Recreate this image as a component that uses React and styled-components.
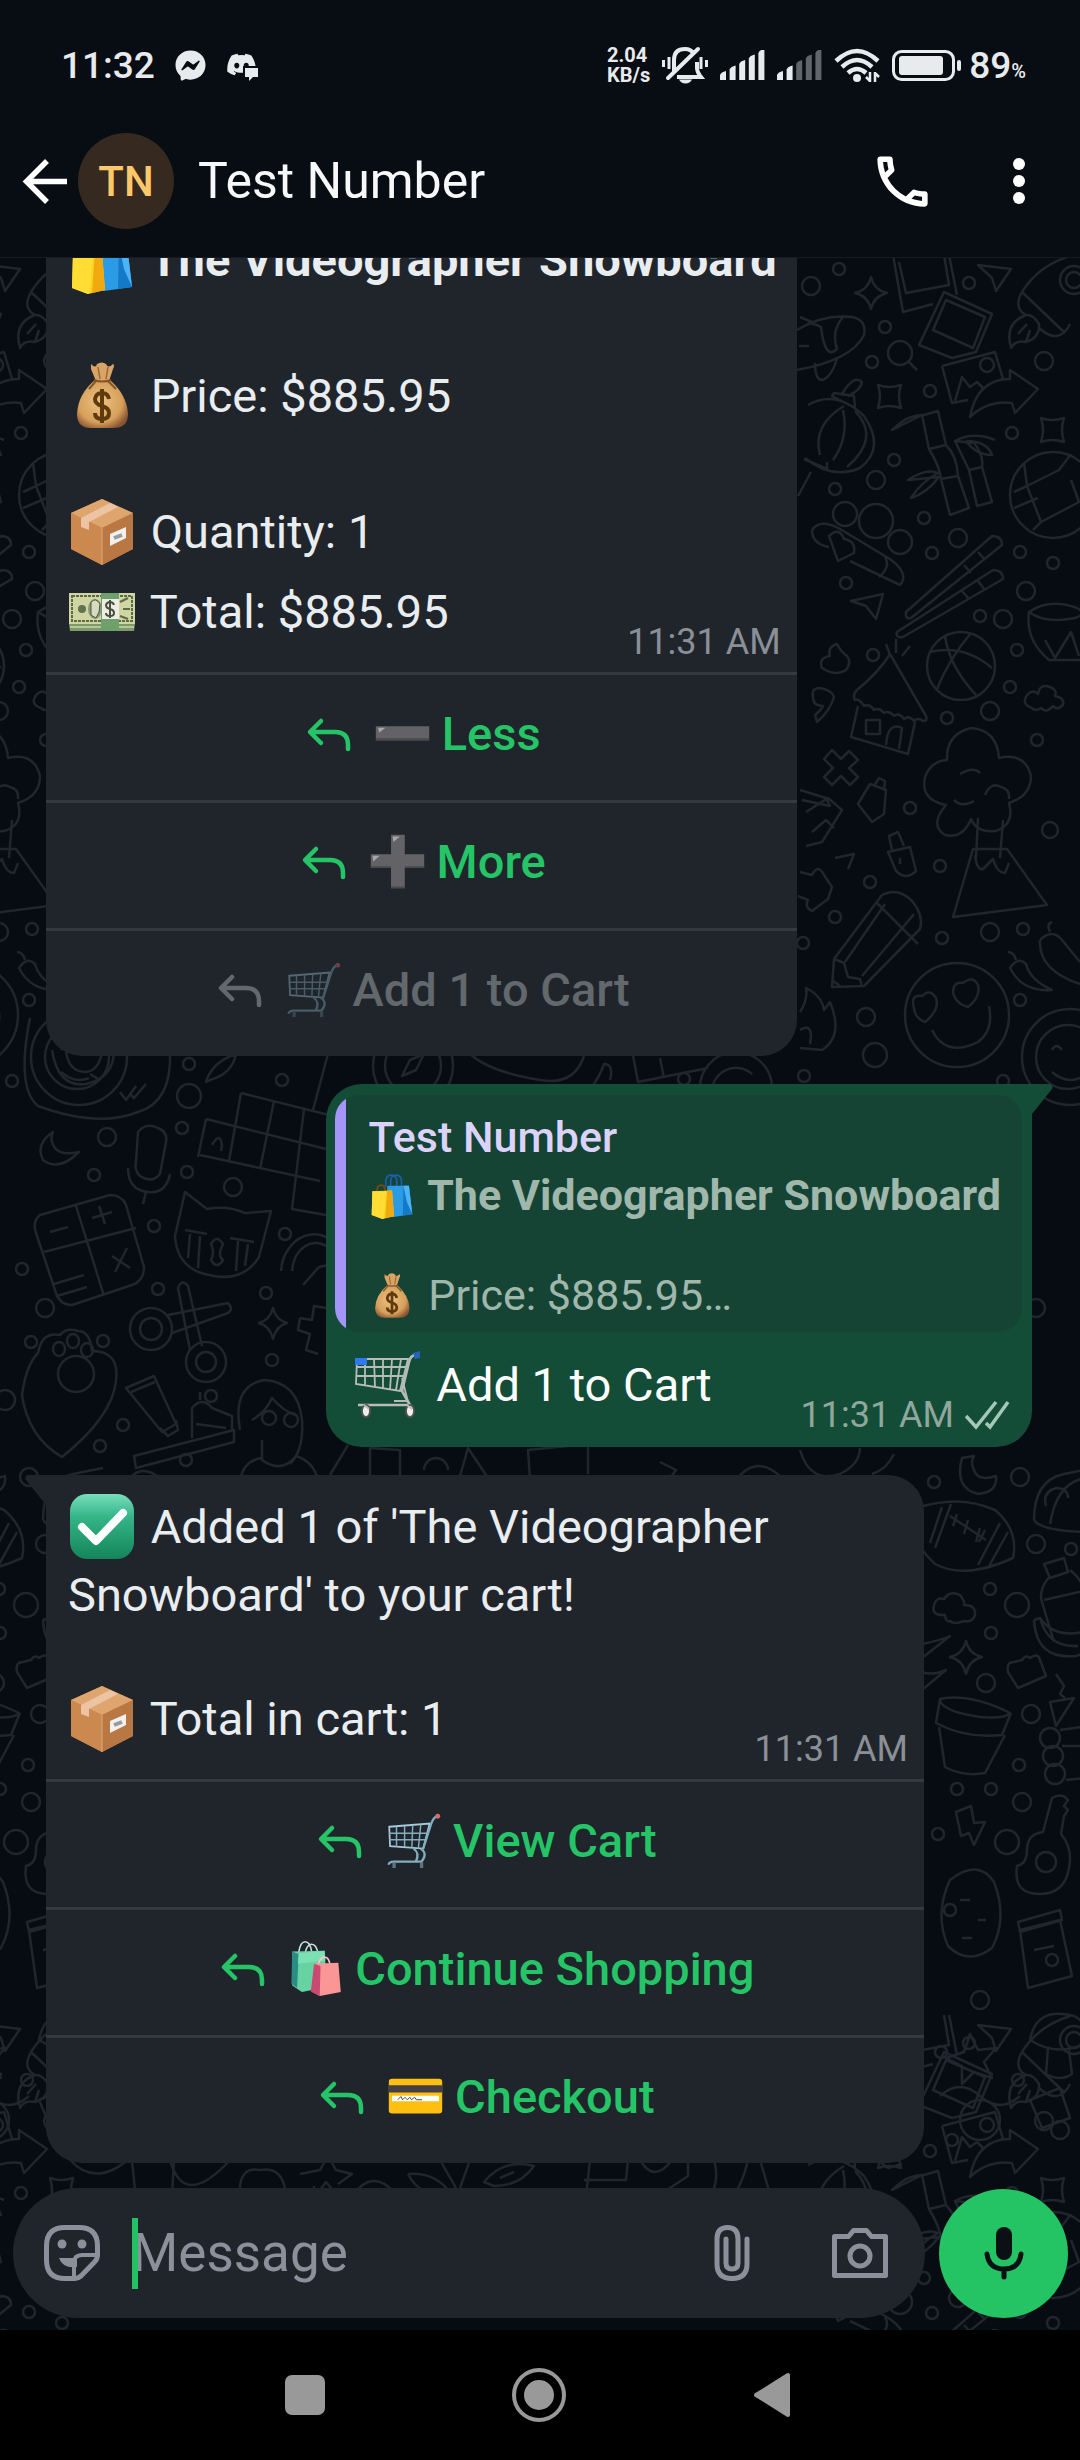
import React from 'react'
import styled, { createGlobalStyle } from 'styled-components';
import { FaFacebookMessenger, FaDiscord } from 'react-icons/fa';
import { MdOutlineCall } from 'react-icons/md';

const GlobalStyle = createGlobalStyle`
  * {
    box-sizing: border-box;
  }
  body {
    margin: 0;
    background: #000;
    font-family: Roboto, "Liberation Sans", sans-serif;
  }
  button, input {
    font-family: inherit;
    border: 0;
    padding: 0;
    background: none;
  }
  p {
    margin: 0;
  }
  svg {
    display: block;
    flex: none;
  }
`

/* ---------- layout ---------- */

const Screen = styled.div`
  display: flex;
  flex-direction: column;
  height: 100vh;
  background: #080c13;
  color: #e9edf0;
`
const StatusBar = styled.div`
  display: flex;
  align-items: center;
  height: 105px;
  padding: 25px 54px 0 61px;
  color: #e8ebed;
`
const StatusGroup = styled.div`
  display: flex;
  align-items: center;
  gap: ${props => props.$gap}px;
  margin-left: ${props => props.$end ? 'auto' : '0'};
`
const Clock = styled.time`
  font-size: 37px;
  font-weight: 500;
`
const Speed = styled.div`
  font-size: 20px;
  font-weight: 700;
  line-height: 20px;
`
const Percent = styled.div`
  display: flex;
  align-items: baseline;
  font-size: 37px;
  font-weight: 500;
`
const PercentSign = styled.span`
  font-size: 20px;
`
const Header = styled.header`
  display: flex;
  align-items: center;
  height: 153px;
  padding: 0 46px 0 19px;
  border-bottom: 1px solid #161b22;
`
const IconButton = styled.button`
  display: flex;
  align-items: center;
  justify-content: center;
  color: ${props => props.$color || '#fff'};
`
const Avatar = styled.div`
  display: flex;
  align-items: center;
  justify-content: center;
  width: 96px;
  height: 96px;
  margin: 0 24px 0 6px;
  border-radius: 50%;
  background: #362a20;
  color: #fdc76b;
  font-size: 42px;
  font-weight: 500;
`
const ContactName = styled.h1`
  flex: 1;
  margin: 0;
  font-size: 50px;
  font-weight: 400;
  color: #f7f8fa;
`
const HeaderActions = styled.div`
  display: flex;
  align-items: center;
  gap: 68px;
`
const Chat = styled.main`
  position: relative;
  display: flex;
  flex-direction: column;
  flex: 1;
  min-height: 0;
  overflow: hidden;
  background: #070b12;
`
const WallpaperSvg = styled.svg`
  position: absolute;
  inset: 0;
  width: 100%;
  height: 100%;
`
const Messages = styled.div`
  position: relative;
  display: flex;
  flex-direction: column;
  justify-content: flex-end;
  gap: 28px;
  flex: 1;
  min-height: 0;
  padding: 0 48px 25px 46px;
`

/* ---------- bubbles ---------- */

const Bubble = styled.article`
  position: relative;
  flex: none;
  align-self: ${props => props.$mine ? 'flex-end' : 'flex-start'};
  max-width: calc(100% - 108px);
  border-radius: 36px;
  background: ${props => props.$mine ? '#144d37' : '#20252c'};
  border-top-left-radius: ${props => props.$tail === 'left' ? '0' : '36px'};
  border-top-right-radius: ${props => props.$tail === 'right' ? '0' : '36px'};
`
const Tail = styled.svg`
  position: absolute;
  top: 0;
  ${props => props.$side}: -21px;
  width: 22px;
  height: 32px;
`
const Body = styled.div`
  padding: 12px 16px 9px 22px;
`
const SentBody = styled.div`
  padding: 13px 22px 11px 28px;
`
const Line = styled.p`
  min-height: 56px;
  padding-right: 4px;
  font-size: 47px;
  line-height: 56px;
  font-weight: ${props => props.$bold ? 700 : 400};
  color: ${props => props.$bright ? '#fff' : '#e9edf0'};
`
const BigEmoji = styled.svg`
  display: inline-block;
  width: 68px;
  height: 68px;
  margin: 6px 3px 6px 0;
  vertical-align: -24px;
`
const Meta = styled.div`
  display: flex;
  align-items: center;
  justify-content: flex-end;
  gap: 11px;
  margin-top: -31px;
  font-size: 36px;
  line-height: 42px;
  color: ${props => props.$mine ? '#8fa79c' : '#8b9097'};
`
const Action = styled.button`
  display: flex;
  align-items: center;
  justify-content: center;
  gap: 19px;
  width: 100%;
  height: 128px;
  padding-bottom: 8px;
  border-top: 3px solid #343941;
  font-size: 47px;
  font-weight: 500;
  line-height: 54px;
  color: #25c466;
  &:disabled {
    color: #63686d;
  }
`
const ActionEmoji = styled.svg`
  display: inline-block;
  width: 55px;
  height: 55px;
  vertical-align: -11px;
  opacity: ${props => props.$dim ? 0.4 : 1};
`
const QuoteWrap = styled.div`
  padding: 11px 10px 0 9px;
`
const Quote = styled.blockquote`
  margin: 0;
  padding: 17px 21px 12px 34px;
  border-radius: 24px;
  background: linear-gradient(to right, #a594f9 11px, #154434 11px);
`
const QuoteName = styled.p`
  margin-bottom: 8px;
  font-size: 43px;
  font-weight: 500;
  line-height: 50px;
  color: #dcd3fc;
`
const QuoteLine = styled.p`
  min-height: 50px;
  font-size: 43px;
  font-weight: ${props => props.$bold ? 700 : 400};
  line-height: 50px;
  color: #a0b7ac;
`
const QuoteEmoji = styled.svg`
  display: inline-block;
  width: 46px;
  height: 46px;
  margin-right: 3px;
  vertical-align: -9px;
`

/* ---------- composer and system bar ---------- */

const Composer = styled.form`
  position: relative;
  display: flex;
  align-items: center;
  gap: 14px;
  padding: 0 12px 12px 13px;
`
const Pill = styled.div`
  display: flex;
  align-items: center;
  flex: 1;
  height: 130px;
  padding: 0 37px 0 31px;
  border-radius: 65px;
  background: #20252c;
`
const Field = styled.label`
  position: relative;
  flex: 1;
  margin: 0 32px;
`
const MessageInput = styled.input`
  width: 100%;
  height: 71px;
  font-size: 53px;
  color: #e9edf0;
  outline: none;
  &::placeholder {
    color: #8b919b;
    opacity: 1;
  }
`
const Caret = styled.span`
  position: absolute;
  left: 0;
  top: 0;
  width: 6px;
  height: 71px;
  background: #22c262;
`
const PillIcons = styled.div`
  display: flex;
  align-items: center;
  gap: 82px;
`
const MicButton = styled.button`
  display: flex;
  align-items: center;
  justify-content: center;
  width: 129px;
  height: 129px;
  border-radius: 50%;
  background: #24c363;
`
const SystemNav = styled.nav`
  display: flex;
  align-items: center;
  justify-content: center;
  gap: 187px;
  height: 130px;
  padding-right: 4px;
  background: #000;
`

/* ---------- emoji ---------- */

const EmojiArt = ({name}) => {
  switch (name) {
    case 'bagsBlue':
      return (
        <g>
          <path d="M25 20V12q0-9 8-9t8 9v8M32 20V12q0-9 8-9t8 9v8" fill="none" stroke="#1a5fb0" strokeWidth="2.5" />
          <path d="M27 19h32l5 42-28 4-9-4z" fill="#2b9be6" />
          <path d="M51 19h8l5 42-14 2z" fill="#1479c8" />
          <path d="M51 19l5 24 8 18-5-42z" fill="#4cb4f3" />
          <path d="M12 31v-5q0-8 6-8t6 8v5" fill="none" stroke="#7a4a10" strokeWidth="2.5" />
          <path d="M5 27l29-1 3 38-17 4-16-6z" fill="#ffd21f" />
          <path d="M27 26h7l3 38-13 3z" fill="#f0a90f" />
          <path d="M5 27h20l-3 40-2 1-16-6z" fill="#ffdd35" />
        </g>
      )
    case 'moneyBag':
      return (
        <g>
          <defs>
            <radialGradient id="sack" cx="45%" cy="45%" r="62%">
              <stop offset="0" stopColor="#edc283" />
              <stop offset="0.7" stopColor="#d6a05b" />
              <stop offset="1" stopColor="#8a5433" />
            </radialGradient>
          </defs>
          <path d="M23 2q5 5 6 0 5-3 9 0 2 5 7 0 2 1 0 5l-4 12H28L23 7z" fill="#d9a566" />
          <path d="M30 5l2 12M40 5l-2 12" stroke="#9a6535" strokeWidth="1.5" />
          <path d="M27 18h15q17 15 18 34 0 14-15 14H23Q9 66 9 52q1-20 18-34z" fill="url(#sack)" />
          <path d="M26 18q8 3 17 0M28 19l-7 8M40 19l8 8" fill="none" stroke="#84552a" strokeWidth="2" />
          <path d="M41 37q-1-6-7-6t-7 6q0 5 7 7t7 7q0 6-7 6t-7-6M34 27v34" fill="none" stroke="#5e3a0c" strokeWidth="4" />
        </g>
      )
    case 'box':
      return (
        <g>
          <path d="M34 1l31 14v36L34 67 3 51V15z" fill="#c5834c" />
          <path d="M34 1l31 14-31 15L3 15z" fill="#dfa56f" />
          <path d="M34 30l31-15v36L34 67z" fill="#b97843" />
          <path d="M3 15l31 15v37L3 51z" fill="#cb8950" />
          <path d="M42 5l8 4-29 15v8l-8-3v-9z" fill="#ecc4a3" />
          <path d="M42 36l16-7v11l-16 8z" fill="#f2f1ef" />
          <path d="M46 40l8-3" stroke="#9b9b9b" strokeWidth="4" />
          <path d="M34 30v37" stroke="#e0aa79" strokeWidth="1" />
        </g>
      )
    case 'cash':
      return (
        <g>
          <path d="M1 15h66v31l-1 7H2l-1-7z" fill="#7f9a69" />
          <path d="M2 49h64" stroke="#c9d6b3" strokeWidth="1.5" />
          <path d="M1 15h66v31H1z" fill="#cfd6a4" />
          <path d="M4 18h60v25H4z" fill="none" stroke="#5b6b46" strokeWidth="2" strokeDasharray="3 1" />
          <circle cx="14" cy="31" r="4" fill="#61724d" />
          <ellipse cx="27" cy="31" rx="7" ry="10" fill="#8b9776" />
          <path d="M23 24q5-5 9 2l-1 8-3 6-5-3z" fill="#d8dbc0" stroke="#4d5841" />
          <path d="M52 24l8-4M52 38l8 3M55 31h7" stroke="#5b6b46" strokeWidth="2" />
          <path d="M33 15h18v38H33z" fill="#6da06a" />
          <path d="M34 21h17v20H34z" fill="#ecebe4" />
          <path d="M46 27q-1-3-4-3t-4 3q0 3 4 4t4 4q0 3-4 3t-4-3M42 22v18" fill="none" stroke="#44513b" strokeWidth="2" />
        </g>
      )
    case 'cartSilver':
      return (
        <g fill="none" stroke="#b7bcb9" strokeWidth="1.8">
          <path d="M3 8h51l-8 32-44-7zM2 16h50M2 25h48M11 8v26M20 8l1 28M29 8v29M38 8l-2 31M47 8l-5 31" />
          <path d="M64 3q-8 1-9 8l-7 29 8 14H4" strokeWidth="2.6" />
          <path d="M48 27l6 24M40 50h14" />
          <path d="M1 7h12v7H1z" fill="#2f79ee" stroke="none" />
          <path d="M59 2l7-2v7l-5 1z" fill="#2364b8" stroke="none" />
          <ellipse cx="12" cy="60" rx="4" ry="6" fill="#efefef" stroke="#555" />
          <ellipse cx="56" cy="60" rx="4" ry="6" fill="#efefef" stroke="#555" />
          <path d="M10 54l5 4M53 54l5 4" />
        </g>
      )
    case 'cartBlue':
      return (
        <g fill="none" stroke="#82aec0" strokeWidth="2.2">
          <path d="M4 17l50-4-8 31-41-3z" stroke="#a5cadb" />
          <path d="M4 25h48M4 33h46M13 17v25M23 16v26M33 15l-1 28M43 14l-3 30" strokeWidth="1.8" />
          <path d="M64 3q-6 3-8 10l-10 31M34 44q8 5 3 16M43 44q9 6 1 16H10q-6 0-7 4" stroke="#82aec0" strokeWidth="2.8" />
          <circle cx="64" cy="4" r="3" fill="#d96a6d" stroke="none" />
          <path d="M10 61v7M44 61v7" strokeWidth="4" stroke="#62757e" />
        </g>
      )
    case 'minus':
      return (
        <g>
          <path d="M1 25h66v17H1z" fill="#636266" />
          <path d="M1 40h66v3H1z" fill="#4a4a4e" />
          <path d="M4 27h9l-8 6z" fill="#a7a7ab" />
        </g>
      )
    case 'plus':
      return (
        <g>
          <path d="M26 1h17v24h24v17H43v25H26V42H1V25h25z" fill="#636266" />
          <path d="M26 65h17v2H26zM1 40h25v2H1zM43 40h24v2H43z" fill="#4a4a4e" />
          <path d="M28 3h9l-8 7zM3 27h9l-8 7z" fill="#a7a7ab" />
        </g>
      )
    case 'check':
      return (
        <g>
          <defs>
            <linearGradient id="tick" x1="0" y1="0" x2="0" y2="1">
              <stop offset="0" stopColor="#77dfbd" />
              <stop offset="0.35" stopColor="#35b588" />
              <stop offset="1" stopColor="#14855a" />
            </linearGradient>
          </defs>
          <rect x="2" y="1" width="64" height="65" rx="17" fill="url(#tick)" />
          <path d="M14 34l14 14 27-28" fill="none" stroke="#fff" strokeWidth="8" strokeLinecap="round" strokeLinejoin="round" />
        </g>
      )
    case 'bagsGreen':
      return (
        <g>
          <path d="M12 14q2-13 8-13t8 12M20 15q2-11 8-11t8 12" fill="none" stroke="#c9e4dc" strokeWidth="2" />
          <path d="M4 13l40-1 3 45-31 6-12-8z" fill="#67d3a3" />
          <path d="M4 13l8 3-2 42-7-5z" fill="#2b8c86" />
          <path d="M12 15l32-3 1 12-34 4z" fill="#7be0b2" />
          <path d="M36 30q2-10 8-10t7 12" fill="none" stroke="#f6c4ca" strokeWidth="2" />
          <path d="M31 28l30-1 3 36-26 5-11-6z" fill="#fb9697" />
          <path d="M31 28l8 3-1 37-11-6z" fill="#c84a72" />
        </g>
      )
    case 'card':
      return (
        <g>
          <rect x="1" y="12" width="66" height="43" rx="4" fill="#fdc010" />
          <path d="M1 20h66v9H1z" fill="#464046" />
          <path d="M5 33h58v7H5z" fill="#fff" />
          <path d="M12 38l4-4 2 4 3-3 3 3 3-3 2 3 4-3 2 3h7" fill="none" stroke="#464046" strokeWidth="1.2" />
        </g>
      )
    default:
      return null
  }
}

const Big = ({name}) => <BigEmoji viewBox="0 0 68 68" aria-hidden="true"><EmojiArt name={name} /></BigEmoji>
const Small = ({name}) => <QuoteEmoji viewBox="0 0 68 68" aria-hidden="true"><EmojiArt name={name} /></QuoteEmoji>

/* ---------- icons ---------- */

const DiscordChat = () => (
  <svg width="33" height="31" viewBox="0 0 33 31">
    <FaDiscord size={31} x={0} y={-1} />
    <path d="M17 16h16v15H17z" fill="#080c13" />
    <path d="M19 18h13v9h-5l-4 4v-4h-4z" fill="currentColor" />
  </svg>
)

const BellOff = () => (
  <svg width="46" height="38" viewBox="0 0 46 38" fill="none" stroke="currentColor" strokeWidth="4">
    <path d="M12 26V14Q12 3 23 3q6 0 9 5M35 16v6q0 4 4 9H15" />
    <path d="M17 33.500h13q-2 4-6.500 4t-6.500-4z" fill="currentColor" stroke="none" />
    <path d="M6 32L36 3" strokeLinecap="round" />
    <path d="M1.500 14v7M7 11v12M39 11v12M44.500 14v7" strokeWidth="3" />
  </svg>
)

const Signal = ({level}) => (
  <svg width="45" height="30" viewBox="0 0 45 30">
    {[0, 1, 2, 3, 4].map(i => (
      <path
        key={i}
        d={`M${i * 9.600} ${25 - i * 5.500}q1-3 6-4V30h-6z`}
        fill="currentColor"
        opacity={i < level ? 1 : 0.4}
      />
    ))}
  </svg>
)

const Wifi = () => (
  <svg width="46" height="35" viewBox="0 0 46 35" fill="none" stroke="currentColor" strokeWidth="4.500">
    <path d="M2 13Q23-7 44 13M8 19q15-14 30 0M14 25q9-8 18 0" />
    <circle cx="23" cy="30" r="4" fill="currentColor" stroke="none" />
    <path d="M36 24v10M36 33l-4-4M41 34V24M41 25l4 4" strokeWidth="2.500" />
  </svg>
)

const Battery = () => (
  <svg width="69" height="31" viewBox="0 0 69 31">
    <rect x="1.500" y="1.500" width="60" height="28" rx="8" fill="none" stroke="currentColor" strokeWidth="3" />
    <rect x="7" y="6" width="44" height="19" rx="3" fill="currentColor" />
    <rect x="65" y="10" width="4" height="11" rx="2" fill="currentColor" />
  </svg>
)

const Back = () => (
  <svg width="53" height="53" viewBox="0 0 53 53" fill="none" stroke="currentColor" strokeWidth="5.500">
    <path d="M48 26.500H8M28 6L7.500 26.500 28 47" />
  </svg>
)

const Dots = () => (
  <svg width="30" height="48" viewBox="0 0 30 48" fill="currentColor">
    <circle cx="15" cy="7" r="6" />
    <circle cx="15" cy="24" r="6" />
    <circle cx="15" cy="41" r="6" />
  </svg>
)

const Reply = () => (
  <svg width="54" height="54" viewBox="0 0 54 54" fill="none" stroke="currentColor" strokeWidth="4.500" strokeLinecap="round" strokeLinejoin="round">
    <path d="M19 14L8 25l11 11M9 25h24q13 0 13 13v4" />
  </svg>
)

const Checks = () => (
  <svg width="45" height="30" viewBox="0 0 45 30" fill="none" stroke="#a3c8b5" strokeWidth="3.500">
    <path d="M1 16l10 11L31 2M21 23l4 4L43 2" />
  </svg>
)

const Sticker = () => (
  <svg width="56" height="56" viewBox="0 0 56 56" fill="none" stroke="currentColor" strokeWidth="5">
    <path d="M31 53.500H21Q2.500 53.500 2.500 35V21Q2.500 2.500 21 2.500h14Q53.500 2.500 53.500 21v9q0 4-3 7L37 51q-3 2.500-6 2.500z" />
    <path d="M30 52V38q0-8 8-8h14" strokeWidth="4" />
    <path d="M15 33h18v9Q19 44 15 33z" fill="currentColor" stroke="none" />
    <circle cx="18" cy="19" r="4.500" fill="currentColor" stroke="none" />
    <circle cx="38" cy="19" r="4.500" fill="currentColor" stroke="none" />
  </svg>
)

const Clip = () => (
  <svg width="36" height="56" viewBox="0 0 36 56" fill="none" stroke="currentColor" strokeWidth="5" strokeLinecap="round">
    <path d="M33 14v25q0 14.500-15 14.500T3 39V14Q3 2.500 13.500 2.500T24 14v24q0 6-6 6t-6-6V14" />
  </svg>
)

const Camera = () => (
  <svg width="56" height="50" viewBox="0 0 56 50" fill="none" stroke="currentColor" strokeWidth="5" strokeLinejoin="round">
    <path d="M2.500 8.500h14l5-6h13l5 6h14v39h-51z" />
    <circle cx="28" cy="28" r="10" />
  </svg>
)

const Mic = () => (
  <svg width="40" height="54" viewBox="0 0 40 54" fill="none" stroke="#0a1014" strokeWidth="5" strokeLinecap="round">
    <rect x="12" y="1" width="16" height="33" rx="8" fill="#0a1014" stroke="none" />
    <path d="M3 28q2 15 17 15t17-15M20 44v7" />
  </svg>
)

/* ---------- wallpaper ---------- */

// [x, y, r] of the little rings scattered between the doodles
const RINGS = [
  [811, 286, 9], [839, 269, 6], [969, 283, 6], [885, 327, 6], [872, 362, 6], [1044, 361, 9], [930, 391, 6],
  [1012, 433, 6], [894, 460, 6], [876, 480, 9], [835, 489, 6], [924, 518, 6], [958, 538, 9], [932, 553, 6],
  [1020, 552, 6], [1053, 563, 6], [846, 583, 6], [1026, 591, 9], [980, 616, 6], [1003, 619, 9], [1017, 650, 6],
  [873, 655, 6], [1010, 687, 6], [990, 711, 9], [947, 718, 6], [1037, 740, 6], [910, 808, 6], [1050, 830, 8],
  [940, 866, 6], [870, 882, 6], [835, 917, 6], [990, 932, 9], [1023, 929, 6], [942, 938, 6], [803, 943, 6],
  [1020, 1000, 6], [866, 1017, 9], [875, 1055, 12], [804, 1076, 6], [684, 1079, 6], [189, 1064, 6],
  [282, 1080, 6], [1003, 1081, 6], [189, 1096, 12], [182, 1128, 6], [107, 1137, 9], [187, 1172, 6],
  [94, 1175, 6], [233, 1187, 9], [154, 1226, 6], [285, 1234, 6], [1013, 1269, 6], [158, 1289, 6],
  [266, 1293, 6], [1036, 1308, 9], [103, 1341, 6], [272, 1360, 6], [1022, 1342, 6], [123, 1425, 6],
  [211, 1396, 6], [100, 1446, 6], [996, 1400, 10], [186, 1460, 6], [934, 1482, 6], [1020, 1477, 9],
  [1036, 1544, 9], [1071, 1549, 6], [990, 1589, 6], [1017, 1605, 12], [991, 1633, 6], [986, 1683, 9],
  [1031, 1714, 9], [1019, 1765, 6], [957, 1789, 6], [991, 1789, 6], [1022, 1802, 9], [938, 1834, 6],
  [1007, 1842, 12], [950, 1910, 6], [1052, 1960, 6], [980, 2000, 9], [941, 2052, 6], [1018, 2080, 6],
  [1060, 2130, 9], [952, 2140, 6], [845, 514, 12], [876, 521, 17], [900, 542, 12],
]

const DOODLES = [
  // sparkles
  'M871 277q3 13 16 16-13 3-16 16-3-13-16-16 13-3 16-16z',
  'M878 385q11 4 23 0-4 11 0 23-12-4-23 0 4-12 0-23z',
  'M1041 418q11 4 23 0-4 12 0 24-12-4-23 0 4-12 0-24z',
  'M273 1308q3 12 14 15-11 3-14 16-3-13-14-16 11-3 14-15z',
  'M966 1641q3 13 16 16-13 3-16 17-3-14-16-17 13-3 16-16z',
  // photos, picture card, arrow
  'M893 255l10 57 30-8M949 255l8 40M899 262l7 31 43-8-5-30',
  'M944 292l48 22-16 38-24 6-33-13zM946 300l39 17-12 31-40-18z',
  'M942 366l53-14 8 27M942 366l10 37 16-3M955 401l7-24 8 10 7-5 6 6',
  'M970 417q7-38 40-38v-9l28 19-23 24-3-10q-24-3-42 14z',
  'M978 265l33 4-15 22-4-13zM851 601l32-7-7 25-10-13z',
  // rocket
  'M1022 292q16-26 48-36M1022 292l43 41M1022 292q-9 16 4 23M1039 328q20 18 31-4M1026 315q-22 8-15 33 4-8 15-6 14-4 13-18-6-10-13-9zM1018 334l9-10M1026 342l4-12',
  // fish
  'M797 330q26-16 55-13 15 3 12 18-12 25-67 35M843 317q-12 14-6 32-12 12-16-22-8-4-12-3M815 363q0 18 8 17 9-4 14-21M800 317l14 6M799 346h10',
  // lantern
  'M808 405q28-16 56 11 22 32-4 52-28 12-55-10M832 396l23 12-1-12-20-3zM842 394q12-20 20-12-1 8-14 14M820 455q-8-30 24-49M833 460q16-22 10-50M855 411q26 27-8 56M804 459l23 10v-7M811 472l-13 24',
  // bamboo
  'M892 430q16-16 32-15l14-4 8 34-17 4-7-34zM929 449q11 18 12 30l17-3q-1-20-12-31M941 479l9 36 19-7-11-32M955 441l14 29 13-3q2-12-8-24zM969 470l8 36 15-4-10-35M955 441q18-10 40-1M966 441q10 14 26 14-5-14-26-14M908 480q18-12 30-7-18 10-27 25 16-5 28-21z',
  // volleyball
  'M1010 495a43 43 0 0 1 86 0 43 43 0 0 1-86 0zM1024 463l3 23 32-16 12-16M1027 486l14 36M1041 522l38-20-8-22M1014 508l24-10M1027 486l-13 6M1041 522l-8 8',
  // sausage
  'M812 530q8-12 28-1l50 30q20 15 10 26l-50-24M812 530q0 14 17 17M829 536q10-10 15 3 12 2 10 14l-16 8zM885 557q6 10-6 20',
  // chopsticks
  'M906 612l86-76q10 0 10 9l-91 73q-6 2-5-6zM897 632l96-62q10 0 10 9l-100 58q-8 1-6-5zM964 565l7 8M978 552l7 8M962 591l7 8M978 581l6 8',
  // basketball
  'M927 666a34 34 0 0 1 68 0 34 34 0 0 1-68 0zM930 652q34-8 62 16M945 636q4 30 31 59M971 633q-22 26-34 56',
  // plant pot
  'M1029 612q20-14 48-4 10 6-2 10-30 6-46-6zM1029 612q-4 28 20 48h40M1045 640l10 18 16-26 8 24',
  // poop, hut
  'M822 668q-4-10 8-12-3-9 7-12 4 8 10 12 5 6-1 14-10 7-24-2z',
  'M855 700q-3-5 2-10 22-18 33-36l36 62q2 5-3 5-5-4-9 0-5-6-10-2-5-7-10-3-5-6-10-3-5-6-10-3-5-7-10-4-5-8-9-6zM858 706l-7 31 57 17 7-32M866 720h14v14h-14zM886 745q2-24 16-17l-3 21M890 655l-4-11M896 653v-14M902 656l8-10',
  // digit card, cloud, candy
  'M813 697q-2-9 7-9 12 2 14 9-4 14-17 25l-2-7q7-6 8-9-10 0-10-9z',
  'M1032 708q-12-4-4-14 6-5 10 0 2-11 12-7 8 3 5 9 10 2 8 9-6 6-10 1-7 8-12 2-6 4-9 0z',
  'M832 750l9 9 8-8 9 9-9 8 9 9-8 8-9-9-9 9-8-8 9-9-9-9z',
  'M945 1615q-14 1-11-10 2-8 10-6 6-9 16-4 5 6 4 10 12 0 11 10-3 8-11 6-10 4-14 0-4 2-5-6z',
  // tree
  'M946 805q-26-5-21-28 6-16 22-17-1-26 24-32 26 2 28 30 26-6 32 18 0 20-22 27 6 22-14 28-18 2-24-12-8 20-26 16-16-10 1-30zM954 800q8 8 20 1M960 774q14-8 20-1M985 795q6-14 16-8 9 2 8 12M978 818l-2 40M1003 820l-3 38',
  // volcano
  'M953 917l20-68h34l40 56zM975 855q2 16 8 14l10-10q4 14 12 14l4-10',
  // bottle, lock, puzzle
  'M858 804l12-20 16 6-2 24-12 8zM874 786l5-8 6 3-1 8',
  'M888 852l22-5 6 24q-10 10-20 0zM892 850l-3-14 9-4 6 14M900 858v6',
  'M835 858l19-4-6 15M800 872l12 3q6-12 12 0l8 12-4 12-16 12q-8-4-4-11l-10-4',
  'M806 812l22-14 14 12-20 32-16 4M812 832l14-12 8 8M800 790l26 8 4 8-28-6',
  // pencil
  'M832 987l2-28 48-64q16-8 30 6 12 14 8 28l-56 57zM834 959l10 4 4 14 12 2 2 8M845 962l40-58M862 976l52-62M876 902l42 42M832 980l8 6',
  // smiley with heart eyes
  'M905 1015a52 52 0 0 1 104 0 52 52 0 0 1-104 0zM932 1030q14 28 46 12 16-12 11-36M914 1008q-4-14 8-12 8-8 14 2 4 12-11 24-10-4-11-14zM953 993q0-12 10-10 10-8 15 2 3 12-10 22-12-3-15-14z',
  // chillies
  'M1010 968q12 24 42 22-22-10-26-26-8-8-16 4zM1040 940q-2 30 40 44M1040 940q12-12 22 0l18 22M1050 932q-4-8 2-10M1008 952q6 0 8 8',
  // fire, swirl face
  'M800 1012q8-12 6-24 16 8 18 22l6-8q14 34-8 48l-22-2M800 1030q14-8 10 14',
  'M1022 1057a48 48 0 0 1 96 0 48 48 0 0 1-96 0zM1036 1057a30 30 0 0 1 64 0 30 30 0 0 1-64 0zM1052 1050q4-8 10 0M1052 1072q14 12 28 6',
  // mug and ticks
  'M30 1018q-14 70 8 88 60 22 100 6 34-10 32-60M52 1050q6 38 34 34 28-6 28-34M66 1050q2 22 20 22 14-2 16-22M90 1074l10 6M120 1092l6 8 10-14M130 1094l4 4 12-14',
  // moon, microphone
  'M53 1132q-18 12-10 28 16 12 36-8-18 4-24-4-6-8-2-16z',
  'M138 1132q8-10 20-4 10 4 8 14l-6 32q-8 10-20 2-6-6-4-14zM128 1168q0 22 20 24 18 2 22-18M146 1192l-3 12',
  // crossword
  'M241 1093l88 22M206 1119l120 30M200 1155l120 26M241 1093l-12 68M274 1101l-14 68M304 1109l-12 100 34 6M206 1119l-8 38M329 1050l-16 60M212 1145q8-14 10 0l-1 6',
  // calculator
  'M40 1215l70-20q12 0 16 10l18 62q0 14-12 18l-60 20q-12 0-16-12l-20-60q-4-12 4-18zM76 1206l28 90M44 1252l92-24M50 1232l18-5M92 1218l20-6M99 1206l6 18M112 1256l18 12M127 1248l-12 24M54 1284l30-9M57 1296l30-9',
  // cat
  'M175 1236l10-44 22 17q20-4 38 4l26-2-12 46q-16 26-50 18-32-6-34-39zM185 1230l22 4M190 1234l-2 24M200 1236l-2 32M230 1238l24 4M238 1241l-2 30M248 1244l-3 22M211 1244q6-10 12 0-6 12 0 16-6 10-12 0 4-8 0-16z',
  // clock
  'M281 1271a33 40 0 0 1 64-10M292 1271a24 30 0 0 1 36-24M303 1285l16-18 10-2',
  // scissors
  'M130 1329a21 21 0 0 1 42 0 21 21 0 0 1-42 0zM140 1329a11 11 0 0 1 22 0 11 11 0 0 1-22 0zM186 1362a20 20 0 0 1 40 0 20 20 0 0 1-40 0zM196 1362a10 10 0 0 1 20 0 10 10 0 0 1-20 0zM168 1315l60-12q6 6 0 10l-56 20M190 1350l-12-62q4-10 10-2l14 60',
  // paw
  'M22 1395q4-30 16-42 4-22 22-18 6-8 18-4 12 0 14 20 28 0 24 30-4 36-54 76-34-20-40-62zM58 1374a18 18 0 0 1 36 0 18 18 0 0 1-36 0zM53 1349a6 7 0 0 1 12 0 6 7 0 0 1-12 0zM67 1341a6 7 0 0 1 12 0 6 7 0 0 1-12 0zM81 1350a6 7 0 0 1 12 0 6 7 0 0 1-12 0z',
  // tube, cake
  'M126 1388l28-12 22 48-14 8zM160 1428l8 8 10-6-2-10M131 1392l24-10',
  'M134 1456l100-26v12l-98 26zM192 1438v-30q10-12 20 0l20 8v14M196 1424l30 4M200 1400v-8',
  // girl with glasses
  'M240 1430q-8-44 24-50 34 2 38 40 2 30-12 44M252 1420q14-8 20-22 12 14 26 18M262 1418a7 7 0 0 1 14 0 7 7 0 0 1-14 0zM284 1420a7 7 0 0 1 14 0 7 7 0 0 1-14 0zM262 1440v20q20 14 34-4M240 1480q4-20 22-22M318 1480q-4-18-22-24',
  // plus, knot
  'M300 1318l12 2 2-14 12 2M300 1318l-2 12 12 4-4 16 12 4',
  // band between the first two bubbles
  'M373 1066a40 40 0 0 1 80 0 40 40 0 0 1-80 0zM385 1066a28 28 0 0 1 56 0 28 28 0 0 1-56 0zM402 1076l8-16 14-6-8 16z',
  'M470 1054q20 18 70 26 34 6 44-24M590 1090q10-14 14-26 10 0 6 16M632 1050l6 32 70-14M660 1058l4 20M700 1090a36 36 0 0 1 72-4M712 1090a24 24 0 0 1 40-16M206 1082q6-20 30-28-4 20-26 26z',
  // band under the sent bubble
  'M330 1475l18-30M370 1480v-32l30 2v28M424 1470a12 12 0 0 1 24 0M460 1476l8-28 20 30M530 1480l-2-30 60-6v30M660 1462l16 8-10 14M736 1480q20-26 44-4M800 1450q10 34 40 24 20-10 20-26M872 1474q14-4 22-20M130 1478q12-14 30 0',
  // moon and football
  'M962 1458q-8 30 16 36 20-2 18-18-18 6-22-6-4-8 0-14z',
  'M917 1508q42-14 78 2 24 20 18 48-48 22-78 6-20-18-28-46M942 1507l-12 36M951 1504l-16 44M1000 1523l-22 42M1008 1532l-20 36M950 1516l36 24M957 1514l-4 12M968 1520l-4 14M980 1528l-4 14M985 1530l-6 12',
  // taco, bottle, bananas
  'M1034 1520q0-40 30-46l30-6M1034 1520q8 12 60 12M1050 1524q8-48 44-46M1046 1506q-4-14 10-18 12 0 12 10',
  'M1044 1564l20-6 4 14-18 6zM1050 1576q-12 14-8 26l12 40M1070 1570q10 8 14 18M1044 1600l44-10M1034 1620q2 40 42 36 14-4 16-12M1034 1620l6-2q8 30 38 28M1040 1618q14 20 42 14',
  'M1008 1672q-2-10 6-10l8-2q4-6 8-2 8-6 10 2l6 16-28 12zM922 1644q20-4 28-8l-28 22M922 1672q10 4 24-2l-24 20',
  // flower pot
  'M940 1699q30-6 70 14-4 6-30 4-40-6-40-18zM940 1699l-4 24q30 16 66 12l9-22M939 1727l6 40q18 10 40 6l20-38',
  // logs, bolt, guitar
  'M1040 1738a10 10 0 0 1 20 0 10 10 0 0 1-20 0zM1043 1756a10 10 0 0 1 20 0 10 10 0 0 1-20 0zM1045 1774a10 10 0 0 1 20 0 10 10 0 0 1-20 0zM1060 1730l30-4M1062 1746h30M1066 1780l26-3M1050 1702l24-4-18 28zM1056 1674l8 12-4 8 5 4',
  'M956 1812l15-6 3 17 11-1-11 23-5-12-8 3z',
  'M1052 1798q10-6 16 2l-4 6 4 4-4 6-3 18q12 14 8 34-4 26-30 26t-22-28q10-2 10-16 0-16 16-18zM1036 1862a10 10 0 0 1 20 0 10 10 0 0 1-20 0z',
  // cucumber, jar, star, mushroom
  'M950 1880q28-22 44 2 14 36-2 66-24 18-44-2-14-32 2-66zM960 1900h10M978 1920h8M962 1938h10',
  'M1020 1930l40-10 12 56-44 12zM1018 1922l42-12 2 10-42 12zM1034 1950l20-4',
  'M970 2034l8 16 18-2-12 14 8 16-18-6-12 12v-18l-16-8 18-6z',
  'M1030 2040q6-34 44-24 16 8 14 26-30 16-58-2zM1048 2048l-2 26q14 8 26 0l-3-24',
  'M940 2096q20-18 40 0t40 0M960 2120a20 20 0 0 1 40 0 20 20 0 0 1-40 0zM1030 2100l30-12 10 30-28 10z',
  // band above the composer
  'M70 2160q26 28 60-2M132 2160l4 40M170 2160q14 50 60 0M174 2160l-2 36M240 2196q-2-30 20-26 24-4 26 26M300 2174l20-4 8-14 8 14 16 4-14 10M314 2186v12l12-16 12 14M352 2196q20-28 42-4M408 2174q30-2 44 22M408 2174q10 20 34 22M440 2160l16 28M470 2160l-10 28M484 2182q20-24 50-16-14 20-40 20zM500 2178l14-6M590 2160l-4 36M628 2160l-2 20h-42M640 2160q14 24 32 0M688 2160v16l-30 20M714 2160q6 20-4 36M748 2160q-6 26-16 36M760 2160l10 34M880 2162l8 6 14-4',
]

const Wallpaper = () => (
  <WallpaperSvg aria-hidden="true">
    <defs>
      <g id="doodles">
        {DOODLES.map((d, i) => <path key={i} d={d} />)}
        {RINGS.map(([x, y, r]) => <circle key={`${x}-${y}`} cx={x} cy={y} r={r} />)}
        <circle cx="987" cy="365" r="7" />
        <circle cx="900" cy="353" r="12" />
        <path d="M908 361l9 9" />
        <circle cx="1074" cy="280" r="14" />
        <circle cx="1074" cy="280" r="8" />
      </g>
    </defs>
    <g transform="translate(0 -258)" fill="none" stroke="#21262e" strokeWidth="2.500" strokeLinejoin="round">
      <use href="#doodles" />
      <use href="#doodles" x="-991" />
      <use href="#doodles" y="1760" />
      <use href="#doodles" x="-991" y="1760" />
    </g>
  </WallpaperSvg>
)

/* ---------- screen ---------- */

const ReplyAction = ({emoji, label, disabled}) => {
  return (
    <Action type="button" disabled={disabled}>
      <Reply />
      <span>
        <ActionEmoji viewBox="0 0 68 68" $dim={disabled} aria-hidden="true"><EmojiArt name={emoji} /></ActionEmoji> {label}
      </span>
    </Action>
  )
}

const App = () => {
  return (
    <Screen>
      <GlobalStyle />
      <StatusBar>
        <StatusGroup $gap={20}>
          <Clock>11:32</Clock>
          <FaFacebookMessenger size={31} />
          <DiscordChat />
        </StatusGroup>
        <StatusGroup $gap={12} $end>
          <Speed>
            <div>2.04</div>
            <div>KB/s</div>
          </Speed>
          <BellOff />
          <Signal level={5} />
          <Signal level={2} />
          <Wifi />
          <StatusGroup $gap={8}>
            <Battery />
            <Percent>89<PercentSign>%</PercentSign></Percent>
          </StatusGroup>
        </StatusGroup>
      </StatusBar>

      <Header>
        <IconButton type="button" aria-label="Back"><Back /></IconButton>
        <Avatar>TN</Avatar>
        <ContactName>Test Number</ContactName>
        <HeaderActions>
          <IconButton type="button" aria-label="Call"><MdOutlineCall size={67} /></IconButton>
          <IconButton type="button" aria-label="Menu"><Dots /></IconButton>
        </HeaderActions>
      </Header>

      <Chat>
        <Wallpaper />
        <Messages>
          <Bubble>
            <Body>
              <Line $bold><Big name="bagsBlue" /> The Videographer Snowboard</Line>
              <Line />
              <Line><Big name="moneyBag" /> Price: $885.95</Line>
              <Line />
              <Line><Big name="box" /> Quantity: 1</Line>
              <Line><Big name="cash" /> Total: $885.95</Line>
              <Meta>11:31 AM</Meta>
            </Body>
            <ReplyAction emoji="minus" label="Less" />
            <ReplyAction emoji="plus" label="More" />
            <ReplyAction emoji="cartBlue" label="Add 1 to Cart" disabled />
          </Bubble>

          <Bubble $mine $tail="right">
            <Tail $side="right" viewBox="0 0 22 32"><path d="M0 0h19q4 1 2 5L1 30l-1 2z" fill="#144d37" /></Tail>
            <QuoteWrap>
              <Quote>
                <QuoteName>Test Number</QuoteName>
                <QuoteLine $bold><Small name="bagsBlue" /> The Videographer Snowboard</QuoteLine>
                <QuoteLine />
                <QuoteLine><Small name="moneyBag" /> Price: $885.95…</QuoteLine>
              </Quote>
            </QuoteWrap>
            <SentBody>
              <Line $bright><Big name="cartSilver" /> Add 1 to Cart</Line>
              <Meta $mine>11:31 AM <Checks /></Meta>
            </SentBody>
          </Bubble>

          <Bubble $tail="left">
            <Tail $side="left" viewBox="0 0 22 32"><path d="M22 0H3q-4 1-2 5l20 25 1 2z" fill="#20252c" /></Tail>
            <Body>
              <Line><Big name="check" /> Added 1 of 'The Videographer Snowboard' to your cart!</Line>
              <Line />
              <Line><Big name="box" /> Total in cart: 1</Line>
              <Meta>11:31 AM</Meta>
            </Body>
            <ReplyAction emoji="cartBlue" label="View Cart" />
            <ReplyAction emoji="bagsGreen" label="Continue Shopping" />
            <ReplyAction emoji="card" label="Checkout" />
          </Bubble>
        </Messages>

        <Composer>
          <Pill>
            <IconButton type="button" $color="#8b919b" aria-label="Stickers"><Sticker /></IconButton>
            <Field>
              <MessageInput type="text" placeholder="Message" aria-label="Message" />
              <Caret />
            </Field>
            <PillIcons>
              <IconButton type="button" $color="#8b919b" aria-label="Attach"><Clip /></IconButton>
              <IconButton type="button" $color="#8b919b" aria-label="Camera"><Camera /></IconButton>
            </PillIcons>
          </Pill>
          <MicButton type="button" aria-label="Record"><Mic /></MicButton>
        </Composer>
      </Chat>

      <SystemNav>
        <IconButton type="button" $color="#999" aria-label="Recents">
          <svg width="40" height="40" viewBox="0 0 40 40"><rect width="40" height="40" rx="7" fill="currentColor" /></svg>
        </IconButton>
        <IconButton type="button" $color="#999" aria-label="Home">
          <svg width="54" height="54" viewBox="0 0 54 54">
            <circle cx="27" cy="27" r="25" fill="none" stroke="currentColor" strokeWidth="4" />
            <circle cx="27" cy="27" r="15" fill="currentColor" />
          </svg>
        </IconButton>
        <IconButton type="button" $color="#999" aria-label="Go back">
          <svg width="38" height="46" viewBox="0 0 38 46"><path d="M35 3v40L3 23z" fill="currentColor" stroke="currentColor" strokeWidth="4" strokeLinejoin="round" /></svg>
        </IconButton>
      </SystemNav>
    </Screen>
  )
}

export default App
